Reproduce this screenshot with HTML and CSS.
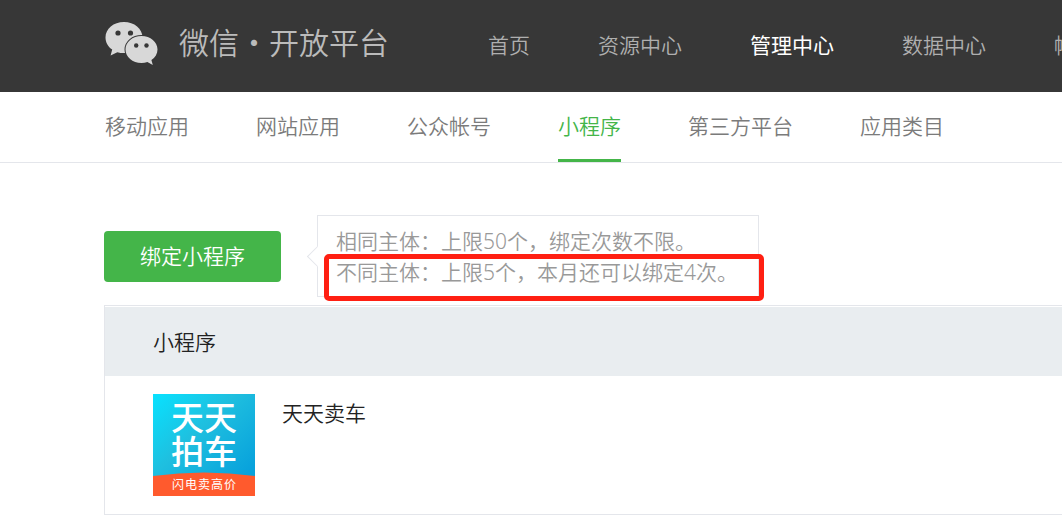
FILE: index.html
```html
<!DOCTYPE html>
<html lang="zh-CN">
<head>
<meta charset="utf-8">
<title>微信开放平台</title>
<link rel="stylesheet" href="styles.css">
</head>
<body>
<header class="header">
  <a class="brand" href="#">
    <svg class="brand-mark" viewBox="0 0 54 44" aria-hidden="true">
      <path class="bubble" d="M19 1C8.500 1 .5 7.800.5 16.500c0 5 2.500 9.300 6.700 12.100L5.600 34.600l6.700-3.400c2.100.6 4.400.9 6.700.9 10.300 0 18.500-6.900 18.500-15.600S29.300 1 19 1z"/>
      <circle class="eye" cx="13" cy="12" r="2.600"/>
      <circle class="eye" cx="25.500" cy="12" r="2.600"/>
      <path class="bubble bubble-front" d="M36.500 15C27.500 15 20.500 21 20.500 28.500S27.500 42 36.500 42c2.100 0 4.100-.3 5.900-.9l5.400 3-1.400-5.100c3.800-2.500 6.100-6.200 6.100-10.500C52.500 21 45.500 15 36.500 15z"/>
      <circle class="eye" cx="31.200" cy="24.500" r="2.200"/>
      <circle class="eye" cx="41.500" cy="24.500" r="2.200"/>
    </svg>
    <span class="brand-name">微信・开放平台</span>
  </a>
  <nav class="main-nav">
    <a href="#">首页</a>
    <a href="#">资源中心</a>
    <a class="active" href="#">管理中心</a>
    <a href="#">数据中心</a>
    <a href="#">帐号中心</a>
  </nav>
</header>
<nav class="tabs">
  <a href="#">移动应用</a>
  <a href="#">网站应用</a>
  <a href="#">公众帐号</a>
  <a class="active" href="#">小程序</a>
  <a href="#">第三方平台</a>
  <a href="#">应用类目</a>
</nav>
<main class="content">
  <div class="actions">
    <button class="bind" type="button">绑定小程序</button>
    <div class="tip">
      <p>相同主体：上限50个，绑定次数不限。</p>
      <p>不同主体：上限5个，本月还可以绑定4次。</p>
      <span class="highlight"></span>
    </div>
  </div>
  <table class="apps">
    <thead>
      <tr><th>小程序</th></tr>
    </thead>
    <tbody>
      <tr>
        <td>
          <div class="app">
            <svg class="app-icon" viewBox="0 0 102 102" aria-hidden="true">
              <defs>
                <linearGradient id="sky" x1="0" y1="0" x2="1" y2="1">
                  <stop offset="0" stop-color="#08e2ff"/>
                  <stop offset=".4" stop-color="#1fbfdf"/>
                  <stop offset=".85" stop-color="#08a2dc"/>
                </linearGradient>
              </defs>
              <rect width="102" height="102" fill="url(#sky)"/>
              <path d="M0 82Q51 75 102 82V102H0z" fill="#ff5a2d"/>
              <text class="icon-title" x="18 51" y="36">天天</text>
              <text class="icon-title" x="18 51" y="70">拍车</text>
              <text class="icon-note" x="19 32 45 58 71" y="95">闪电卖高价</text>
            </svg>
            <span class="app-name">天天卖车</span>
          </div>
        </td>
      </tr>
    </tbody>
  </table>
</main>
</body>
</html>
```

FILE: styles.css
```css
* {
  box-sizing: border-box;
}

body {
  margin: 0;
  overflow-x: hidden;
  background: #fff;
  color: #222;
  font: 350 21px/31px "Noto Sans", "Noto Sans CJK SC", sans-serif;
}

a {
  color: inherit;
  text-decoration: none;
  white-space: nowrap;
}

p {
  margin: 0;
}

.header {
  display: flex;
  align-items: center;
  gap: 99px;
  height: 92px;
  padding-left: 105px;
  overflow: hidden;
  background: #373737;
  color: #afafaf;
}

.brand {
  display: flex;
  flex: none;
  align-items: center;
  gap: 20px;
  padding-bottom: 7px;
  color: #bbb;
}

.brand-mark {
  width: 54px;
  height: 44px;
  overflow: visible;
}

.bubble {
  fill: #d8d8d8;
}

.bubble-front {
  stroke: #373737;
  stroke-width: 2;
  paint-order: stroke;
}

.eye {
  fill: #373737;
}

.brand-name {
  font-size: 30px;
  line-height: 44px;
}

.main-nav {
  display: flex;
  gap: 68px;
  padding-bottom: 2px;
}

.main-nav .active {
  color: #fff;
  font-weight: 400;
}

.tabs {
  display: flex;
  gap: 67px;
  padding-left: 105px;
  border-bottom: 1px solid #e4e6eb;
  color: #7b7b7b;
}

.tabs a {
  padding: 19px 0 17px;
  border-bottom: 3px solid transparent;
}

.tabs .active {
  border-color: #44b549;
  color: #44b549;
}

.content {
  padding: 52px 0 13px 104px;
}

.actions {
  display: flex;
  align-items: center;
  gap: 36px;
}

.bind {
  padding: 10px 36px;
  border: 0;
  border-radius: 4px;
  background: #44b549;
  color: #fff;
  font: inherit;
  white-space: nowrap;
}

.tip {
  position: relative;
  padding: 10px 20px 8px 18px;
  border: 1px solid #e4e6eb;
  color: #999;
  white-space: nowrap;
}

.tip::before {
  content: "";
  position: absolute;
  top: 33px;
  left: -8px;
  width: 14px;
  height: 14px;
  border: solid #e4e6eb;
  border-width: 0 0 1px 1px;
  background: #fff;
  transform: rotate(45deg);
}

.tip p {
  position: relative;
}

.highlight {
  position: absolute;
  inset: 38px -6px -5px 6px;
  border: 5px solid #ff1f12;
  border-radius: 5px;
}

.apps {
  width: 100%;
  margin-top: 8px;
  border: 1px solid #e4e6eb;
  border-right: 0;
  border-spacing: 0;
}

.apps th {
  padding: 20px 48px 18px;
  border-top: 1px solid #fff;
  background: #e9edf0;
  font-weight: inherit;
  text-align: left;
}

.apps td {
  padding: 18px 48px;
}

.app {
  display: flex;
  gap: 27px;
}

.app-icon {
  flex: none;
  width: 102px;
  height: 102px;
}

.icon-title {
  fill: #fff;
  font-size: 33px;
  font-weight: 500;
}

.icon-note {
  fill: #fff;
  font-size: 12px;
  font-weight: 400;
}

.app-name {
  padding-top: 4px;
}
```
